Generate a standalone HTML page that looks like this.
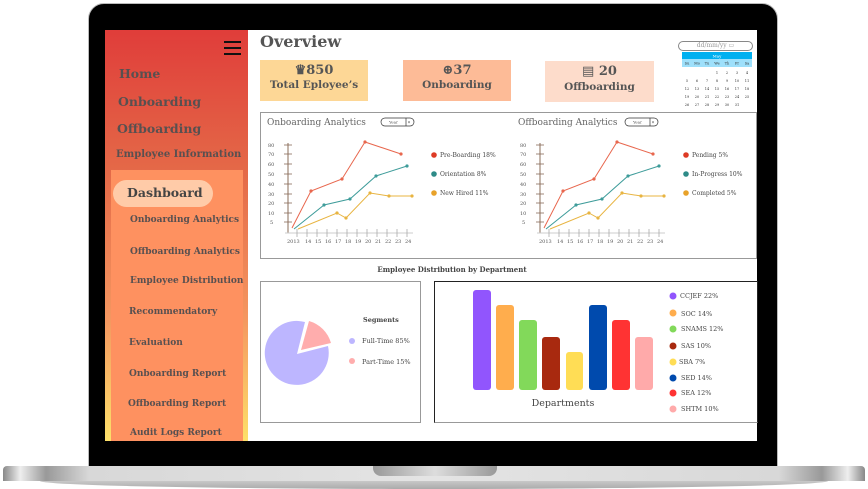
<!DOCTYPE html>
<html><head><meta charset="utf-8">
<style>
*{margin:0;padding:0;box-sizing:border-box}
body{width:868px;height:489px;background:#fff;position:relative;overflow:hidden;font-family:"DejaVu Serif","Liberation Serif",serif;color:#555}
.a{position:absolute}
.bezel{left:88px;top:3px;width:690px;height:465px;background:#000;border-radius:16px 16px 0 0;border:1px solid #bbb}
.screen{left:105px;top:30px;width:652px;height:411px;background:#fff;overflow:hidden}
.side{left:105px;top:30px;width:143px;height:411px;background:linear-gradient(#e03d3a 0%,#e46a48 35%,#f49660 70%,#fde06a 100%)}
.panel{left:111px;top:170px;width:132px;height:271px;background:#fe9160}
.nav{font-weight:bold;color:#585050;white-space:nowrap}
.card{text-align:center;font-weight:bold;color:#555}
.box{border:1px solid #999;background:#fff}
.base{left:3px;top:466px;width:862px;height:15px;background:linear-gradient(90deg,#888 0%,#eee 2%,#999 5%,#d8d8d8 10%,#e4e4e4 50%,#d8d8d8 90%,#999 95%,#eee 98%,#888 100%);border-radius:4px 4px 0 0}
.base2{left:40px;top:481px;width:788px;height:8px;background:linear-gradient(#c8c8c8,#aaa);border-radius:0 0 50% 50%/0 0 100% 100%}
</style></head><body>
<div class="a bezel"></div>
<div class="a screen"></div>
<div class="a side"></div>
<div class="a panel"></div>
<div class="a" style="left:224px;top:41px;width:17px;height:2px;background:#111"></div>
<div class="a" style="left:224px;top:47px;width:17px;height:2px;background:#111"></div>
<div class="a" style="left:224px;top:53px;width:17px;height:2px;background:#111"></div>
<div class="a nav" style="left:119px;top:66px;font-size:12.5px">Home</div>
<div class="a nav" style="left:118px;top:94px;font-size:12.5px">Onboarding</div>
<div class="a nav" style="left:117px;top:121px;font-size:12.5px">Offboarding</div>
<div class="a nav" style="left:116px;top:149px;font-size:10px">Employee Information</div>
<div class="a" style="left:113px;top:180px;width:100px;height:27px;background:#ffcba8;border-radius:14px"></div>
<div class="a nav" style="left:127px;top:185px;font-size:12.5px;color:#444">Dashboard</div>
<div class="a nav" style="left:130px;top:215px;font-size:9px">Onboarding Analytics</div>
<div class="a nav" style="left:130px;top:247px;font-size:9px">Offboarding Analytics</div>
<div class="a nav" style="left:130px;top:276px;font-size:9px">Employee Distribution</div>
<div class="a nav" style="left:129px;top:307px;font-size:9px">Recommendatory</div>
<div class="a nav" style="left:129px;top:338px;font-size:9px">Evaluation</div>
<div class="a nav" style="left:129px;top:369px;font-size:9px">Onboarding Report</div>
<div class="a nav" style="left:128px;top:399px;font-size:9px">Offboarding Report</div>
<div class="a nav" style="left:130px;top:428px;font-size:9px">Audit Logs Report</div>

<div class="a" style="left:260px;top:32px;font-size:16px;font-weight:bold;color:#555">Overview</div>
<div class="a card" style="left:260px;top:60px;width:108px;height:41px;background:#fdd796"><div style="font-size:13px;margin-top:3px">♛850</div><div style="font-size:10.5px;margin-top:1px">Total Eployee’s</div></div>
<div class="a card" style="left:403px;top:60px;width:108px;height:41px;background:#fdbb97"><div style="font-size:13px;margin-top:3px">⊕37</div><div style="font-size:10.5px;margin-top:1px">Onboarding</div></div>
<div class="a card" style="left:545px;top:61px;width:109px;height:41px;background:#fddccb"><div style="font-size:13px;margin-top:3px">▤ 20</div><div style="font-size:10.5px;margin-top:2px">Offboarding</div></div>

<div class="a" style="left:678px;top:41px;width:75px;height:10px;border:1px solid #888;border-radius:6px;font-size:6px;color:#999;text-align:center;line-height:8px">dd/mm/yy ▭</div>
<svg class="a" style="left:682px;top:52px" width="70" height="56">
<rect x="0" y="0" width="70" height="7" fill="#00b0f0"/><text x="35" y="5.5" font-size="4" fill="#fff" text-anchor="middle">May</text>
<rect x="0" y="7" width="70" height="8" fill="#9ee0fb"/>
<g font-size="3.5" fill="#333" text-anchor="middle">
<text x="5" y="12.5">Su</text><text x="15" y="12.5">Mo</text><text x="25" y="12.5">Tu</text><text x="35" y="12.5">We</text><text x="45" y="12.5">Th</text><text x="55" y="12.5">Fr</text><text x="65" y="12.5">Sa</text>
<text x="35" y="22">1</text><text x="45" y="22">2</text><text x="55" y="22">3</text><text x="65" y="22">4</text>
<text x="5" y="30">5</text><text x="15" y="30">6</text><text x="25" y="30">7</text><text x="35" y="30">8</text><text x="45" y="30">9</text><text x="55" y="30">10</text><text x="65" y="30">11</text>
<text x="5" y="38">12</text><text x="15" y="38">13</text><text x="25" y="38">14</text><text x="35" y="38">15</text><text x="45" y="38">16</text><text x="55" y="38">17</text><text x="65" y="38">18</text>
<text x="5" y="46">19</text><text x="15" y="46">20</text><text x="25" y="46">21</text><text x="35" y="46">22</text><text x="45" y="46">23</text><text x="55" y="46">24</text><text x="65" y="46">25</text>
<text x="5" y="54">26</text><text x="15" y="54">27</text><text x="25" y="54">28</text><text x="35" y="54">29</text><text x="45" y="54">30</text><text x="55" y="54">31</text>
</g></svg>

<div class="a box" style="left:260px;top:112px;width:497px;height:147px"></div>
<svg class="a" style="left:0;top:0" width="868" height="489">
<defs><g id="ch">
<line x1="288" y1="143" x2="288" y2="233" stroke="#8a6d5a" stroke-width="1"/>
<line x1="285" y1="233" x2="413" y2="233" stroke="#ccc" stroke-width="1"/>
<g stroke="#8a6d5a" stroke-width=".8"><line x1="284" y1="145" x2="292" y2="145"/><line x1="284" y1="154" x2="292" y2="154"/><line x1="284" y1="164" x2="292" y2="164"/><line x1="284" y1="174" x2="292" y2="174"/><line x1="284" y1="184" x2="292" y2="184"/><line x1="284" y1="194" x2="292" y2="194"/><line x1="284" y1="203" x2="292" y2="203"/><line x1="284" y1="213" x2="292" y2="213"/><line x1="284" y1="222" x2="292" y2="222"/></g>
<g stroke="#aaa" stroke-width=".8"><line x1="297" y1="229" x2="297" y2="237"/><line x1="307" y1="229" x2="307" y2="237"/><line x1="317" y1="229" x2="317" y2="237"/><line x1="327" y1="229" x2="327" y2="237"/><line x1="337" y1="229" x2="337" y2="237"/><line x1="347" y1="229" x2="347" y2="237"/><line x1="357" y1="229" x2="357" y2="237"/><line x1="367" y1="229" x2="367" y2="237"/><line x1="377" y1="229" x2="377" y2="237"/><line x1="387" y1="229" x2="387" y2="237"/><line x1="397" y1="229" x2="397" y2="237"/><line x1="407" y1="229" x2="407" y2="237"/></g>
<g font-size="5" fill="#555" font-family="DejaVu Serif,serif">
<text x="268" y="147">80</text><text x="268" y="156">70</text><text x="268" y="166">60</text><text x="268" y="176">50</text><text x="268" y="186">40</text><text x="268" y="196">30</text><text x="268" y="205">20</text><text x="268" y="215">10</text><text x="270" y="224">5</text>
<text x="287" y="243">2013</text><text x="305" y="243">14</text><text x="315" y="243">15</text><text x="325" y="243">16</text><text x="335" y="243">17</text><text x="345" y="243">18</text><text x="355" y="243">19</text><text x="365" y="243">20</text><text x="375" y="243">21</text><text x="385" y="243">22</text><text x="395" y="243">23</text><text x="405" y="243">24</text></g>
<polyline points="292,228 311,191 342,179 365,142 401,154" fill="none" stroke="#e8674e" stroke-width="1"/>
<polyline points="294,229 324,205 350,199 376,176 407,166" fill="none" stroke="#3e9c9a" stroke-width="1"/>
<polyline points="298,229 337,213 346,218 370,193 389,196 412,196" fill="none" stroke="#e8b441" stroke-width="1"/>
<g fill="#e8674e"><circle cx="311" cy="191" r="1.6"/><circle cx="342" cy="179" r="1.6"/><circle cx="365" cy="142" r="1.6"/><circle cx="401" cy="154" r="1.6"/></g>
<g fill="#3e9c9a"><circle cx="324" cy="205" r="1.6"/><circle cx="350" cy="199" r="1.6"/><circle cx="376" cy="176" r="1.6"/><circle cx="407" cy="166" r="1.6"/></g>
<g fill="#e8b441"><circle cx="337" cy="213" r="1.6"/><circle cx="346" cy="218" r="1.6"/><circle cx="370" cy="193" r="1.6"/><circle cx="389" cy="196" r="1.6"/><circle cx="412" cy="196" r="1.6"/></g>
<circle cx="434" cy="155" r="2.8" fill="#dd3b25"/><circle cx="434" cy="174" r="2.8" fill="#2e8b88"/><circle cx="434" cy="193" r="2.8" fill="#e8a22a"/>
</g></defs>
<use href="#ch"/>
<use href="#ch" x="252"/>
<g font-size="6" fill="#444" font-family="DejaVu Serif,serif">
<text x="440" y="157">Pre-Boarding 18%</text><text x="440" y="176">Orientation 8%</text><text x="440" y="195">New Hired 11%</text>
<text x="692" y="157">Pending 5%</text><text x="692" y="176">In-Progress 10%</text><text x="692" y="195">Completed 5%</text></g>
<g font-size="9" fill="#666" font-family="DejaVu Serif,serif"><text x="267" y="125">Onboarding Analytics</text><text x="518" y="125">Offboarding Analytics</text></g>
<g font-size="4" fill="#555"><rect x="381" y="118" width="33" height="8" rx="4" fill="#fff" stroke="#333" stroke-width=".7"/><line x1="406" y1="118" x2="406" y2="126" stroke="#333" stroke-width=".7"/><text x="389" y="123.5">Year</text><text x="408" y="123.5">▾</text>
<rect x="625" y="118" width="33" height="8" rx="4" fill="#fff" stroke="#333" stroke-width=".7"/><line x1="650" y1="118" x2="650" y2="126" stroke="#333" stroke-width=".7"/><text x="633" y="123.5">Year</text><text x="652" y="123.5">▾</text></g>
<text x="452" y="272" font-size="7" font-weight="bold" fill="#444" text-anchor="middle" font-family="DejaVu Serif,serif">Employee Distribution by Department</text>
</svg>

<div class="a box" style="left:260px;top:281px;width:161px;height:142px"></div>
<div class="a" style="left:434px;top:281px;width:324px;height:142px;border:1px solid #222;border-bottom-color:#999;background:#fff"></div>
<svg class="a" style="left:0;top:0" width="868" height="489">
<path d="M297 354 L305 322 A32 32 0 1 0 328 346 Z" fill="#bdb6ff"/>
<path d="M301 350 L309 321 A32 32 0 0 1 331 343 Z" fill="#ffadad"/>
<g font-family="DejaVu Serif,serif" fill="#444" font-size="6.5"><text x="363" y="322" font-weight="bold">Segments</text><text x="362" y="343">Full-Time 85%</text><text x="362" y="364">Part-Time 15%</text></g>
<circle cx="352" cy="341" r="3" fill="#bdb6ff"/><circle cx="352" cy="361" r="3" fill="#ffadad"/>
<g>
<rect x="473" y="290" width="18" height="100" rx="3" fill="#9155fd"/>
<rect x="496" y="305" width="18" height="85" rx="3" fill="#ffad4d"/>
<rect x="519" y="320" width="18" height="70" rx="3" fill="#82d95a"/>
<rect x="542" y="337" width="18" height="53" rx="3" fill="#a8290f"/>
<rect x="566" y="352" width="17" height="38" rx="3" fill="#ffdd55"/>
<rect x="589" y="305" width="18" height="85" rx="3" fill="#004aad"/>
<rect x="612" y="320" width="18" height="70" rx="3" fill="#ff3333"/>
<rect x="635" y="337" width="18" height="53" rx="3" fill="#ffaaaa"/>
</g>
<text x="563" y="406" font-size="9.5" fill="#444" text-anchor="middle" font-family="DejaVu Serif,serif">Departments</text>
<g><circle cx="673" cy="296" r="3.5" fill="#9155fd"/><circle cx="673" cy="313" r="3.5" fill="#ffad4d"/><circle cx="673" cy="329" r="3.5" fill="#82d95a"/><circle cx="673" cy="346" r="3.5" fill="#a8290f"/><circle cx="673" cy="362" r="3.5" fill="#ffdd55"/><circle cx="673" cy="378" r="3.5" fill="#004aad"/><circle cx="673" cy="393" r="3.5" fill="#ff3333"/><circle cx="673" cy="409" r="3.5" fill="#ffaaaa"/></g>
<g font-family="DejaVu Serif,serif" fill="#444" font-size="6.5"><text x="680" y="298">CCJEF 22%</text><text x="681" y="316">SOC 14%</text><text x="681" y="331">SNAMS 12%</text><text x="681" y="348">SAS 10%</text><text x="679" y="364">SBA 7%</text><text x="681" y="380">SED 14%</text><text x="681" y="395">SEA 12%</text><text x="681" y="411">SHTM 10%</text></g>
</svg>

<div class="a base2"></div>
<div class="a base"></div>
<div class="a" style="left:373px;top:466px;width:124px;height:10px;background:linear-gradient(90deg,#999,#ddd 50%,#999);border-radius:0 0 8px 8px"></div>
</body></html>
